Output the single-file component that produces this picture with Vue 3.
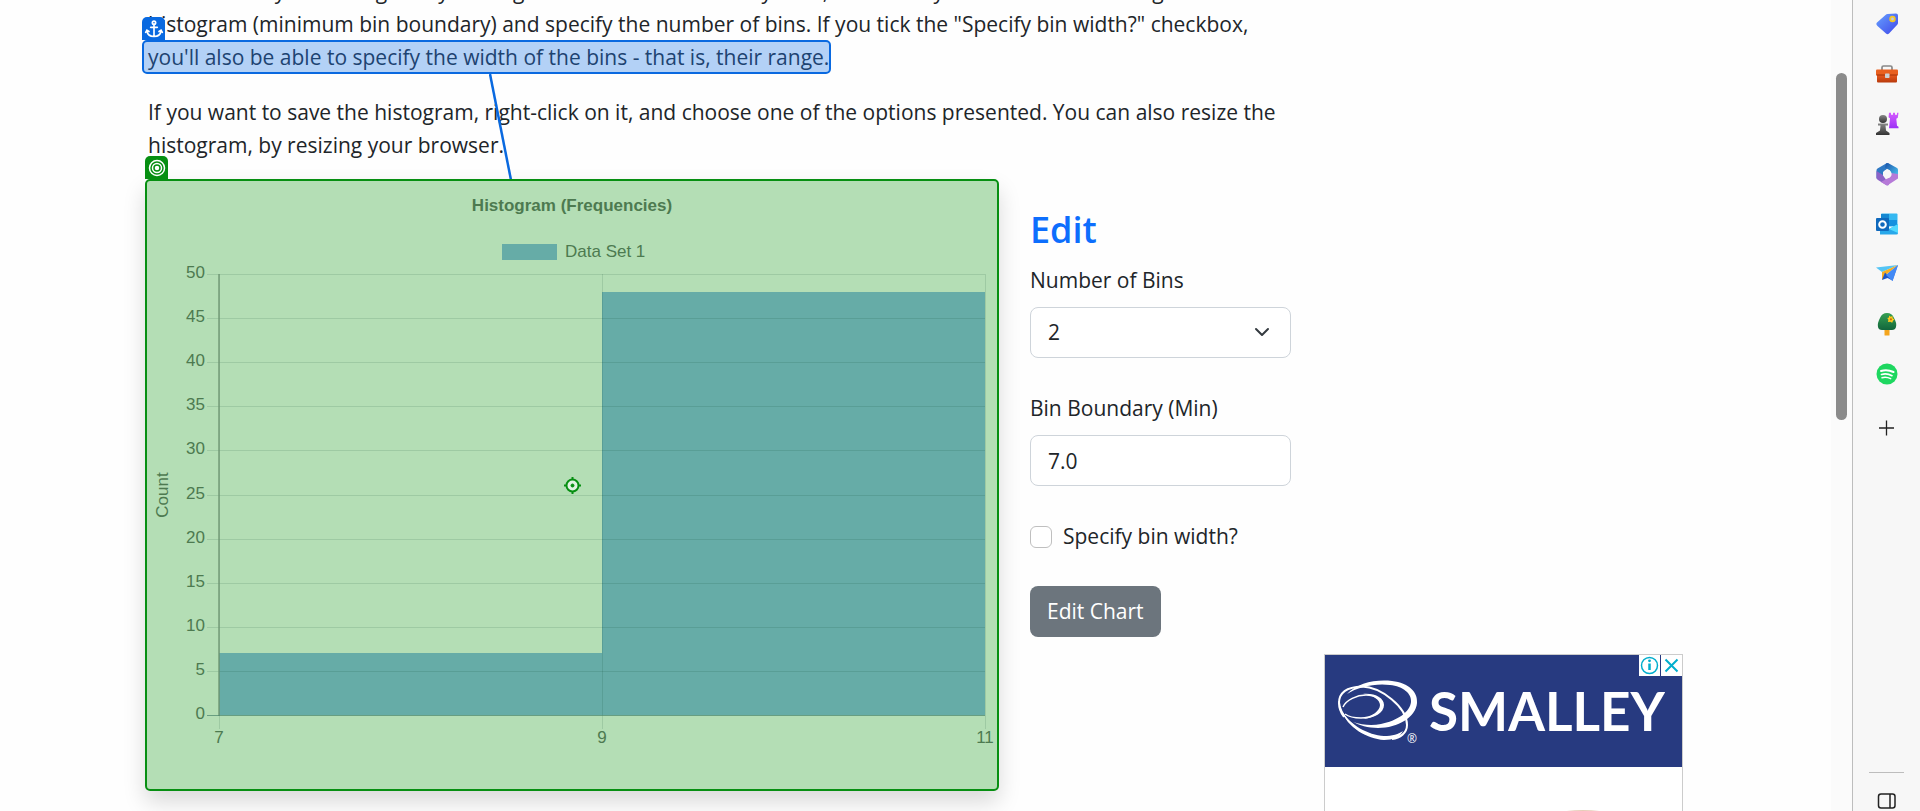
<script setup>
import { ref } from 'vue'

const bins = ref('2')
const boundary = ref('7.0')
const specifyWidth = ref(false)

const plot = { left: 74, right: 840, top: 95, bottom: 536 }
const yOf = (v) => Math.round(plot.bottom - (v / 50) * (plot.bottom - plot.top))
const yTicks = [0, 5, 10, 15, 20, 25, 30, 35, 40, 45, 50]
const xTicks = [
  { value: 7, x: 74 },
  { value: 9, x: 457 },
  { value: 11, x: 840 }
]
const bars = [
  { x: 74, count: 7 },
  { x: 457, count: 48 }
]
</script>

<template>
  <div class="window">
    <main class="page">
      <div class="container">
        <div class="content">
          <div class="copy">
            <p>
              You can easily set a range for your edges and also the boundary lines, and while you are at it set the edge of the<br />
              histogram (minimum bin boundary) and specify the number of bins. If you tick the "Specify bin width?" checkbox,<br />
              <span class="marked">you'll also be able to specify the width of the bins - that is, their range.<span class="badge anchor">
                <svg viewBox="0 0 24 24" width="20" height="20" fill="none" stroke="#fff" stroke-width="2" stroke-linecap="round">
                  <circle cx="12" cy="4.5" r="2" />
                  <path d="M12 6.5V21M8 10h8M3.5 14c.5 4.500 4 7 8.500 7s8-2.500 8.500-7M2 16l1.500-2.500L6 15M22 16l-1.500-2.500L18 15" />
                </svg>
              </span>
              <svg class="connector" viewBox="0 0 24 106" width="24" height="106"><path d="M1 0L22 106" stroke="#0969e0" stroke-width="2.500" /></svg>
              </span>
            </p>
            <p>
              If you want to save the histogram, right-click on it, and choose one of the options presented. You can also resize the<br />
              histogram, by resizing your browser.
            </p>
          </div>

          <div class="row">
            <section class="chart">
              <span class="badge target">
                <svg viewBox="0 0 20 20" width="20" height="20" fill="none" stroke="#fff" stroke-width="1.500">
                  <circle cx="10" cy="10" r="7.500" /><circle cx="10" cy="10" r="4.500" /><circle cx="10" cy="10" r="1.500" fill="#fff" />
                </svg>
              </span>
              <svg class="plot" viewBox="0 0 850 608">
                <g transform="translate(-2 -2)">
                  <text class="title" x="427" y="32" text-anchor="middle">Histogram (Frequencies)</text>
                  <rect x="357" y="65" width="55" height="16" fill="#66aca7" />
                  <text class="tick" x="420" y="78">Data Set 1</text>
                  <rect v-for="b in bars" :key="b.x" :x="b.x" :y="yOf(b.count)" width="383" :height="plot.bottom - yOf(b.count)" fill="#66aca7" />
                  <g fill="#003c1e" fill-opacity="0.12">
                    <rect v-for="t in yTicks" :key="t" x="62" :y="yOf(t)" width="778" height="1" />
                    <rect v-for="t in xTicks" :key="t.value" :x="t.x" y="95" width="1" height="455" />
                  </g>
                  <rect x="73" y="95" width="2" height="442" fill="#6f9774" fill-opacity="0.700" />
                  <rect x="62" y="536" width="778" height="1" fill="#44806a" fill-opacity="0.600" />
                  <text v-for="t in yTicks" :key="t" class="tick" x="60" :y="yOf(t) + 4" text-anchor="end">{{ t }}</text>
                  <text v-for="t in xTicks" :key="t.value" class="tick" :x="t.x" y="564" text-anchor="middle">{{ t.value }}</text>
                  <text class="tick" transform="translate(23 316) rotate(-90)" text-anchor="middle">Count</text>
                  <g stroke="#078f12" stroke-width="2">
                    <circle cx="427.500" cy="306.500" r="6" fill="#e2f3e3" />
                    <path d="M427.500 298v3M427.500 312v3M419 306.500h3M433 306.500h3" />
                    <circle cx="427.500" cy="306.500" r="1.500" fill="#078f12" stroke-width="1" />
                  </g>
                </g>
              </svg>
            </section>

            <form class="edit" @submit.prevent>
              <h2>Edit</h2>
              <label for="bins">Number of Bins</label>
              <div class="select-wrap">
                <select id="bins" v-model="bins" class="field">
                  <option>2</option>
                  <option>3</option>
                  <option>4</option>
                </select>
                <svg class="chevron" viewBox="0 0 16 16" width="16" height="16" fill="none" stroke="#343a40" stroke-width="2" stroke-linecap="round" stroke-linejoin="round"><path d="M2 5l6 6 6-6" /></svg>
              </div>
              <label for="boundary">Bin Boundary (Min)</label>
              <input id="boundary" v-model="boundary" class="field" type="text" />
              <div class="check">
                <input id="width" v-model="specifyWidth" type="checkbox" />
                <label for="width">Specify bin width?</label>
              </div>
              <button class="submit" type="submit">Edit Chart</button>
            </form>
          </div>
        </div>

        <aside class="ad">
          <div class="banner">
            <svg class="rings" viewBox="0 0 84 64" width="84" height="64" fill="none" stroke="#fff">
              <path fill="#fff" stroke="none" fill-rule="evenodd" d="M10 15C20 4 39 0 55 2c17 2 26 11 25 22-1 14-19 25-39 25-10 0-19-3-25-6 9 3 19 4 28 2 16-3 29-12 30-22 1-8-8-16-21-17C38 4 21 8 10 15z" />
              <path stroke-width="2" d="M25 7.500C11 8 2 13 2 24c0 5 2 10 5 14M25 7.500C44 8 70 28 70 46c0 8-7 13-15 14" />
              <path stroke-width="1.500" d="M6 28C9 21 20 16 29 16c9 0 16 4 16 10 0 8-11 13-21 13-7 0-12-1-16-4" />
              <path fill="#fff" stroke="none" d="M26 15c12-1 21 4 21 11 0 8-10 13-21 14 9-3 17-8 17-14 0-5-7-10-17-11zM5 32c8 14 26 24 42 25 8 0 15-2 19-5-3 6-10 9-19 9C30 60 10 48 5 32z" />
              <path stroke-width="1.500" d="M2 22C3 37 17 49 29 55" />
            </svg>
            <span class="reg">®</span>
            <strong>SMALLEY</strong>
            <div class="ad-tools">
              <button type="button" aria-label="Ad information">
                <svg viewBox="0 0 21 21" width="21" height="21" fill="none" stroke="#00aecd"><circle cx="10.500" cy="10.500" r="8" stroke-width="1.500" /><path d="M10.500 8.500V15" stroke-width="2.500" /><circle cx="10.500" cy="5.800" r="1.400" fill="#00aecd" stroke="none" /></svg>
              </button>
              <button type="button" aria-label="Close ad">
                <svg viewBox="0 0 21 21" width="21" height="21" stroke="#00aecd" stroke-width="2"><path d="M4.500 4.500l12 12M16.500 4.500l-12 12" /></svg>
              </button>
            </div>
          </div>
          <svg class="product" viewBox="0 0 357 80" width="100%"><ellipse cx="258" cy="68" rx="58" ry="25" fill="#e7cdb8" /></svg>
        </aside>
      </div>
    </main>

    <div class="scrollbar"><div class="thumb"></div></div>

    <nav class="sidebar">
      <svg width="0" height="0" class="defs">
        <defs>
          <linearGradient id="gTag" x1="0" y1="0" x2="1" y2="1"><stop stop-color="#67a2ff" /><stop offset="1" stop-color="#3f46e8" /></linearGradient>
          <linearGradient id="gBox" x1="0" y1="0" x2="0" y2="1"><stop stop-color="#e8591d" /><stop offset="1" stop-color="#b83a0c" /></linearGradient>
          <linearGradient id="gPawn" x1="0" y1="0" x2="0" y2="1"><stop stop-color="#888" /><stop offset="1" stop-color="#333" /></linearGradient>
          <linearGradient id="gRook" x1="0" y1="0" x2="0" y2="1"><stop stop-color="#d65bff" /><stop offset="1" stop-color="#9b31f5" /></linearGradient>
          <linearGradient id="gTree" x1="0" y1="0" x2="0" y2="1"><stop stop-color="#35a052" /><stop offset="1" stop-color="#12663c" /></linearGradient>
          <linearGradient id="gBlue" x1="0" y1="0" x2="1" y2="1"><stop stop-color="#1a50a8" /><stop offset="1" stop-color="#4fcdf5" /></linearGradient>
        </defs>
      </svg>
      <button type="button" aria-label="Shopping">
        <svg viewBox="0 0 24 24" width="24" height="24"><path d="M12.500 2L21 1.500q2 0 2 2V11q0 1-1 2l-8 8.500q-1.500 1.500-3 0L2.500 14q-2-2-.5-3.500L10.500 3q1-1 2-1z" fill="url(#gTag)" /><circle cx="17.500" cy="7" r="2.300" fill="#b9c6f0" stroke="#f5c722" stroke-width="1.800" /></svg>
      </button>
      <button type="button" aria-label="Tools">
        <svg viewBox="0 0 24 24" width="24" height="24"><path d="M7 8V5.500Q7 4 8.500 4h7Q17 4 17 5.500V8" fill="none" stroke="#888" stroke-width="1.700" /><rect x="1" y="7.500" width="22" height="6" rx="1" fill="#e9601f" /><path d="M2 13h20v6.500q0 1-1 1H3q-1 0-1-1z" fill="url(#gBox)" /><path d="M1.500 13h21" stroke="#a23209" /><rect x="10" y="11.500" width="4.500" height="4.500" rx=".7" fill="#ccd1d5" /></svg>
      </button>
      <button type="button" aria-label="Games">
        <svg viewBox="0 0 24 24" width="24" height="24"><path d="M14 .8h2v2h2v-2h2v2h2v-2h1.500l-.7 5-1.500 1 .7 7 1.500 1v1.500H14l1-10-1.500-1z" fill="url(#gRook)" /><circle cx="8" cy="7" r="4" fill="url(#gPawn)" /><path d="M3 11.500h10v2h-2.500l.5 5 3.500 2.500v2H1v-2l4-2.500.5-5H3z" fill="url(#gPawn)" /></svg>
      </button>
      <button type="button" aria-label="Microsoft 365">
        <svg viewBox="0 0 24 24" width="24" height="24"><path d="M12 1L2.500 6.500Q1.500 7 1.500 8.500v8L8 13V10l5-4 1-4z" fill="#2f79c4" /><path d="M11 1.500L13 1l9 5q1 .700 1 2v8l-7-4-1-3.500-5-3z" fill="url(#gBlue)" /><path d="M1.500 9l6.500 4 2.500 4 3.500 6-2 .5-9-5.500q-1.500-1-1.500-2z" fill="#8c63c7" /><path d="M23 12v4.500L13 23q-1 .5-2 0l-5-3 9-5 1-4z" fill="#b67ad8" /><circle cx="12.300" cy="12" r="4.300" fill="#f7f7f7" /></svg>
      </button>
      <button type="button" aria-label="Outlook">
        <svg viewBox="0 0 24 24" width="24" height="24"><rect x="6" y="1.500" width="16.500" height="13" rx="1" fill="#35b8f1" /><path d="M6 2h8v6H6z" fill="#1588d2" /><path d="M14 8h8v6h-8z" fill="#1490df" /><path d="M5 13l9 4 9-5v9q0 1.500-1.500 1.500H5z" fill="#28a8ea" /><path d="M14 17l9-5v9z" fill="#50d9ff" /><rect x="1" y="6" width="13" height="13" rx="1" fill="#0f69bd" /><circle cx="7.500" cy="12.500" r="3.300" fill="none" stroke="#fff" stroke-width="2" /></svg>
      </button>
      <button type="button" aria-label="Drop">
        <svg viewBox="0 0 24 24" width="24" height="24"><path d="M1 5.500L23 3 7 10z" fill="#55c5f5" /><path d="M23 3L12 12.500 17.500 19z" fill="#3978f0" /><path d="M23 3L7 10v8l5-6z" fill="#f5ad21" /><path d="M7 18l3-7.500 7.500 8-5-2.500z" fill="#1b55c6" /><path d="M23 3L11 13l6.500 6z" fill="#4289f5" /></svg>
      </button>
      <button type="button" aria-label="Tree planting">
        <svg viewBox="0 0 24 24" width="24" height="24"><rect x="9.500" y="16" width="5" height="7.500" rx=".5" fill="#f4a51d" /><path d="M12 1q5 0 7 5 3 5 2 9-.7 3-4 3H7q-3.500 0-4-3-.8-4 2-9 2-5 7-5z" fill="url(#gTree)" /><path d="M14 3.500l1.700 1.200L17.500 4l.2 2.200L19.500 7.500l-1.500 1.200-.8 2-1.900-1L13 10l.4-2.200L12.300 6l1.700-.5z" fill="#ffc91e" /><circle cx="15.900" cy="7.300" r="1.100" fill="#c56f0d" /></svg>
      </button>
      <button type="button" aria-label="Spotify">
        <svg viewBox="0 0 24 24" width="24" height="24" fill="none" stroke="#fff" stroke-linecap="round"><circle cx="12" cy="12" r="10.500" fill="#1ed760" stroke="none" /><path d="M6 9q6-2 12.500 1" stroke-width="2" /><path d="M6.500 12.500q5.500-1.500 10.500 1.200" stroke-width="1.700" /><path d="M7 15.700q4.500-1.200 8.700 1" stroke-width="1.400" /></svg>
      </button>
      <button type="button" class="add" aria-label="Add">
        <svg viewBox="0 0 24 24" width="24" height="24" stroke="#222" stroke-width="1.300"><path d="M4 12h15M11.500 4.500v15" /></svg>
      </button>
      <div class="divider"></div>
      <button type="button" class="panel" aria-label="Toggle sidebar">
        <svg viewBox="0 0 24 24" width="24" height="24" fill="none" stroke="#222" stroke-width="1.500"><rect x="3.500" y="5" width="16.500" height="14" rx="2.500" /><path d="M15 5v14" /></svg>
      </button>
    </nav>
  </div>
</template>

<style>
body {
  background: #fefefe;
}
</style>

<style scoped>
* {
  box-sizing: border-box;
}
.window {
  position: relative;
  z-index: 0;
  display: grid;
  grid-template-columns: 1fr 21px 68px;
  height: 100vh;
  overflow: hidden;
  font-family: "Open Sans", "Noto Sans", sans-serif;
  font-size: 21px;
  line-height: 33px;
  color: #212529;
}
.page {
  min-width: 0;
  overflow: hidden;
}
.container {
  display: flex;
  justify-content: space-between;
  gap: 32px;
  margin: -25px 148px 0 145px;
}
.content {
  flex: 1;
  max-width: 1146px;
}
.copy {
  padding-left: 3px;
  white-space: nowrap;
}
p {
  margin: 0 0 22px;
}
.copy p:last-child {
  margin-bottom: 17px;
}
.marked {
  display: inline-block;
  position: relative;
  color: #1d4371;
}
.marked::before {
  content: "";
  position: absolute;
  z-index: -1;
  inset: -1px -2px 0 -6px;
  background: #b3d1f6;
  border: 2px solid #0969e0;
  border-radius: 5px;
}
.badge {
  position: absolute;
  display: flex;
  align-items: center;
  justify-content: center;
  width: 23px;
  height: 23px;
  border-radius: 5px 5px 0 0;
}
.anchor {
  left: -6px;
  top: -24px;
  background: #0969e0;
}
.connector {
  position: absolute;
  left: 341px;
  top: 33px;
}
.row {
  display: grid;
  grid-template-columns: 854fr 261fr;
  column-gap: 31px;
  align-items: start;
}
.chart {
  position: relative;
  background: #b4deb5;
  border: 2px solid #078f12;
  border-radius: 5px;
  box-shadow: 0 11px 22px rgba(0, 0, 0, 0.15);
}
.target {
  left: -2px;
  top: -25px;
  background: #078f12;
}
.plot {
  display: block;
  width: 100%;
}
.plot text {
  font-family: "Liberation Sans", Arial, sans-serif;
  font-size: 17px;
  fill: #4d7a50;
}
.plot .title {
  font-weight: 700;
}
.edit {
  display: flex;
  flex-direction: column;
  align-items: stretch;
  padding-top: 27px;
}
h2 {
  margin: 0 0 11px;
  font-size: 36px;
  line-height: 47px;
  font-weight: 600;
  color: #0d6efd;
}
.edit > label {
  margin-bottom: 10px;
}
.field {
  width: 100%;
  height: 51px;
  margin-bottom: 34px;
  padding: 0 17px;
  border: 1px solid #ced4da;
  border-radius: 8px;
  background: #fff;
  color: #212529;
  font: inherit;
  appearance: none;
}
.select-wrap {
  position: relative;
}
.chevron {
  position: absolute;
  right: 21px;
  top: 17px;
  pointer-events: none;
}
.check {
  display: flex;
  align-items: center;
  gap: 11px;
  margin-bottom: 33px;
}
.check input {
  appearance: none;
  width: 22px;
  height: 22px;
  margin: 0;
  border: 1px solid #bfbfbf;
  border-radius: 6px;
  background: #fff;
}
.submit {
  align-self: flex-start;
  height: 51px;
  padding: 0 17px;
  border: 0;
  border-radius: 8px;
  background: #6c757d;
  color: #fff;
  font: inherit;
}
.ad {
  flex: none;
  width: 359px;
  margin-top: 679px;
  border: 1px solid #ccc;
  background: #fff;
}
.banner {
  position: relative;
  display: flex;
  align-items: center;
  height: 112px;
  padding-left: 12px;
  background: #273a80;
  color: #fff;
}
.banner strong {
  margin-left: 8px;
  font-family: Lato, sans-serif;
  font-size: 53px;
  line-height: 60px;
  font-weight: 700;
}
.reg {
  align-self: flex-end;
  width: 0;
  margin-bottom: 18px;
  margin-left: -14px;
  margin-right: 14px;
  font-size: 12px;
  line-height: 20px;
}
.ad-tools {
  position: absolute;
  top: 0;
  right: 0;
  display: flex;
  gap: 1px;
}
.ad-tools button {
  display: flex;
  padding: 0;
  border: 0;
  background: #fff;
}
.product {
  display: block;
}
.scrollbar {
  padding: 73px 5px 0;
  background: #fbfbfb;
}
.thumb {
  height: 347px;
  border-radius: 6px;
  background: #8b8b8b;
}
.sidebar {
  display: flex;
  flex-direction: column;
  align-items: center;
  border-left: 1px solid #bdbdbd;
  background: #f7f7f7;
}
.defs {
  position: absolute;
}
.sidebar button {
  display: flex;
  align-items: center;
  justify-content: center;
  flex: none;
  width: 100%;
  height: 50px;
  padding: 0 0 3px;
  border: 0;
  background: none;
}
.sidebar .add {
  margin-top: 4px;
}
.divider {
  width: 35px;
  height: 1px;
  margin-top: auto;
  background: #bdbdbd;
}
.sidebar .panel {
  height: 38px;
  padding: 17px 0 0;
}
</style>
